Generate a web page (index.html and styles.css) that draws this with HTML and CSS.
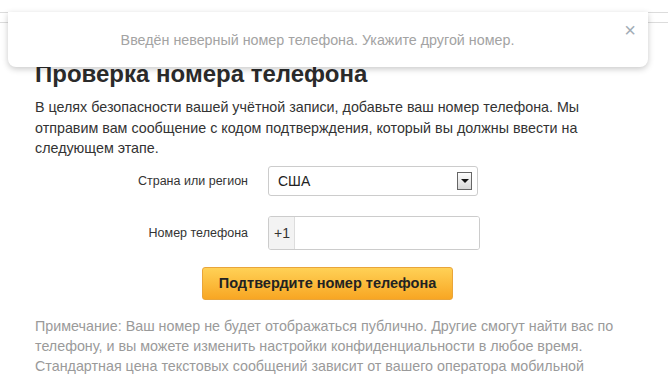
FILE: index.html
```html
<!DOCTYPE html>
<html lang="ru">
<head>
  <meta charset="UTF-8" />
  <title>Проверка номера телефона</title>
  <link rel="stylesheet" href="styles.css">
</head>
<body>

  <div class="topbar"></div>

  <div class="toast">
    <p class="toast-text">Введён неверный номер телефона. Укажите другой номер.</p>
    <span class="toast-close">&times;</span>
  </div>

  <div class="container">
    <h1>Проверка номера телефона</h1>

    <p class="intro">В целях безопасности вашей учётной записи, добавьте ваш номер телефона. Мы отправим вам сообщение с кодом подтверждения, который вы должны ввести на следующем этапе.</p>

    <div class="form">
      <label class="form-label">Страна или регион</label>
      <div class="select">
        <span class="select-value">США</span>
        <span class="select-arrow"></span>
      </div>

      <label class="form-label">Номер телефона</label>
      <div class="phone-group">
        <span class="phone-prefix">+1</span>
        <input class="phone-input" type="text">
      </div>
    </div>

    <div class="actions">
      <button class="confirm-btn">Подтвердите номер телефона</button>
    </div>

    <p class="note">Примечание: Ваш номер не будет отображаться публично. Другие смогут найти вас по телефону, и вы можете изменить настройки конфиденциальности в любое время. Стандартная цена текстовых сообщений зависит от вашего оператора мобильной связи.</p>
  </div>

</body>
</html>
```

FILE: styles.css
```css
body {
  font-family: "Liberation Sans", Arial, sans-serif;
  margin: 0;
  background-color: #fff;
  color: #333;
}

.topbar {
  margin-top: 12px;
  height: 9px;
  border-top: 1px solid #dcdcdc;
  border-bottom: 1px solid #dcdcdc;
}

.toast {
  position: absolute;
  top: 12px;
  left: 8px;
  width: 640px;
  height: 55px;
  background: #fff;
  border-radius: 0 0 8px 8px;
  box-shadow: 0 2px 6px rgba(0, 0, 0, 0.22);
}

.toast-text {
  margin: 0;
  padding: 20px 31px 0 10px;
  text-align: center;
  font-size: 14.3px;
  color: #a3a3a3;
}

.toast-close {
  position: absolute;
  top: 8px;
  right: 12px;
  font-size: 20px;
  line-height: 20px;
  color: #a2acb6;
}

.container {
  width: 585px;
  margin-left: 35px;
}

h1 {
  margin: 38px 0 10px;
  font-size: 24px;
  line-height: 26px;
  color: #2b2b2b;
}

.intro {
  margin: 0;
  font-size: 14.3px;
  line-height: 20.5px;
  color: #333;
}

.form {
  display: grid;
  grid-template-columns: 213px 212px;
  column-gap: 20px;
  row-gap: 20px;
  align-items: center;
  margin-top: 7px;
}

.form-label {
  text-align: right;
  font-size: 12.5px;
  color: #333;
}

.select {
  display: flex;
  align-items: center;
  justify-content: space-between;
  width: 210px;
  height: 30px;
  box-sizing: border-box;
  border: 1px solid #ccc;
  border-radius: 3px;
  padding: 0 5px 0 9px;
  font-size: 14px;
  color: #222;
}

.select-arrow {
  position: relative;
  width: 13px;
  height: 16px;
  border: 1px solid #666;
  background: linear-gradient(#fdfdfd, #d8d8d8);
}

.select-arrow::after {
  content: "";
  position: absolute;
  left: 3px;
  top: 6px;
  border-left: 4px solid transparent;
  border-right: 4px solid transparent;
  border-top: 4px solid #111;
}

.phone-group {
  display: flex;
  height: 34px;
  box-sizing: border-box;
  border: 1px solid #ccc;
  border-radius: 3px;
  overflow: hidden;
}

.phone-prefix {
  display: flex;
  align-items: center;
  width: 26px;
  padding-left: 5px;
  box-sizing: border-box;
  background: #f3f3f3;
  border-right: 1px solid #ddd;
  font-size: 14px;
  color: #333;
}

.phone-input {
  flex: 1;
  min-width: 0;
  border: none;
  outline: none;
  padding: 0 8px;
  font-size: 14px;
}

.actions {
  display: flex;
  justify-content: center;
  margin-top: 17px;
}

.confirm-btn {
  width: 251px;
  height: 33px;
  border: 1px solid #e9a53a;
  border-radius: 3px;
  background: linear-gradient(#ffd156, #f8a623);
  font-family: "Liberation Sans", Arial, sans-serif;
  font-size: 14.5px;
  font-weight: bold;
  color: #222;
  cursor: pointer;
}

.note {
  margin: 16px 0 0;
  font-size: 14.3px;
  line-height: 20px;
  color: #9a9a9a;
}
```
